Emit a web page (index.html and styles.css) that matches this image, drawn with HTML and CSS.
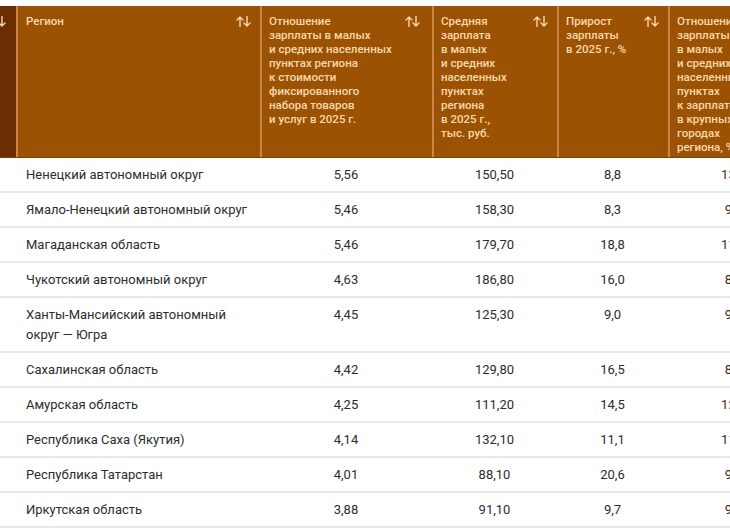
FILE: index.html
```html
<!DOCTYPE html>
<html lang="ru">
<head>
<meta charset="utf-8">
<title>Зарплаты в малых и средних населенных пунктах</title>
<link rel="stylesheet" href="styles.css">
</head>
<body>
<div class="page">
  <div class="table">
    <div class="row head">
      <div class="cell c0 dark"><span class="htext"></span><svg class="sort" viewBox="0 0 15 11"><path d="M4 10.5V1M1 4l3-3 3 3M11 0.5V10M8 7l3 3 3-3"/></svg></div>
      <div class="cell"><span class="htext">Регион</span><svg class="sort" viewBox="0 0 15 11"><path d="M4 10.5V1M1 4l3-3 3 3M11 0.5V10M8 7l3 3 3-3"/></svg></div>
      <div class="cell c3"><span class="htext">Отношение<br>зарплаты в малых<br>и средних населенных<br>пунктах региона<br>к стоимости<br>фиксированного<br>набора товаров<br>и услуг в 2025 г.</span><svg class="sort" viewBox="0 0 15 11"><path d="M4 10.5V1M1 4l3-3 3 3M11 0.5V10M8 7l3 3 3-3"/></svg></div>
      <div class="cell"><span class="htext">Средняя<br>зарплата<br>в малых<br>и средних<br>населенных<br>пунктах<br>региона<br>в 2025 г.,<br>тыс. руб.</span><svg class="sort" viewBox="0 0 15 11"><path d="M4 10.5V1M1 4l3-3 3 3M11 0.5V10M8 7l3 3 3-3"/></svg></div>
      <div class="cell"><span class="htext">Прирост<br>зарплаты<br>в 2025 г., %</span><svg class="sort" viewBox="0 0 15 11"><path d="M4 10.5V1M1 4l3-3 3 3M11 0.5V10M8 7l3 3 3-3"/></svg></div>
      <div class="cell"><span class="htext">Отношение<br>зарплаты<br>в малых<br>и средних<br>населенных<br>пунктах<br>к зарплате<br>в крупных<br>городах<br>региона, %</span><svg class="sort" viewBox="0 0 15 11"><path d="M4 10.5V1M1 4l3-3 3 3M11 0.5V10M8 7l3 3 3-3"/></svg></div>
    </div>

    <div class="row"><div class="cell"></div><div class="cell name">Ненецкий автономный округ</div><div class="cell num">5,56</div><div class="cell num">150,50</div><div class="cell num">8,8</div><div class="cell num">130,5</div></div>
    <div class="row"><div class="cell"></div><div class="cell name">Ямало-Ненецкий автономный округ</div><div class="cell num">5,46</div><div class="cell num">158,30</div><div class="cell num">8,3</div><div class="cell num">96,2</div></div>
    <div class="row"><div class="cell"></div><div class="cell name">Магаданская область</div><div class="cell num">5,46</div><div class="cell num">179,70</div><div class="cell num">18,8</div><div class="cell num">111,4</div></div>
    <div class="row"><div class="cell"></div><div class="cell name">Чукотский автономный округ</div><div class="cell num">4,63</div><div class="cell num">186,80</div><div class="cell num">16,0</div><div class="cell num">89,7</div></div>
    <div class="row"><div class="cell"></div><div class="cell name">Ханты-Мансийский автономный<br>округ — Югра</div><div class="cell num">4,45</div><div class="cell num">125,30</div><div class="cell num">9,0</div><div class="cell num">99,1</div></div>
    <div class="row"><div class="cell"></div><div class="cell name">Сахалинская область</div><div class="cell num">4,42</div><div class="cell num">129,80</div><div class="cell num">16,5</div><div class="cell num">86,3</div></div>
    <div class="row"><div class="cell"></div><div class="cell name">Амурская область</div><div class="cell num">4,25</div><div class="cell num">111,20</div><div class="cell num">14,5</div><div class="cell num">120,4</div></div>
    <div class="row"><div class="cell"></div><div class="cell name">Республика Саха (Якутия)</div><div class="cell num">4,14</div><div class="cell num">132,10</div><div class="cell num">11,1</div><div class="cell num">110,6</div></div>
    <div class="row"><div class="cell"></div><div class="cell name">Республика Татарстан</div><div class="cell num">4,01</div><div class="cell num">88,10</div><div class="cell num">20,6</div><div class="cell num">96,8</div></div>
    <div class="row"><div class="cell"></div><div class="cell name">Иркутская область</div><div class="cell num">3,88</div><div class="cell num">91,10</div><div class="cell num">9,7</div><div class="cell num">99,5</div></div>
  </div>
</div>
</body>
</html>
```

FILE: styles.css
```css
html, body {
  margin: 0;
  padding: 0;
  background: #ffffff;
}

.page {
  width: 730px;
  height: 530px;
  overflow: hidden;
  padding-top: 6px;
  box-sizing: border-box;
  font-family: Roboto, "Liberation Sans", sans-serif;
}

.table {
  margin-left: -34px;
  width: 840px;
}

.row {
  display: grid;
  grid-template-columns: 50px 244px 172px 125px 111px 138px;
  border-bottom: 2px solid #e8e8e6;
}

.row .cell {
  box-sizing: border-box;
  min-width: 0;
  white-space: nowrap;
}

/* header */
.head {
  background: #9b5202;
  border-bottom: 1px solid #7c3f04;
  color: #f8d9ae;
  font-size: 11.5px;
  font-weight: 500;
  line-height: 14px;
}

.head .cell {
  display: flex;
  justify-content: space-between;
  align-items: flex-start;
  padding: 8px 9px 3px 7px;
  border-left: 2px solid #c68646;
}

.head .cell:first-child {
  border-left: none;
}

.head .cell:nth-child(2) {
  padding-left: 8px;
}

.head .c3 {
  padding-right: 12px;
}

.head .dark {
  background: #6b2e03;
  padding-right: 10px;
}

.sort {
  flex: none;
  width: 15px;
  height: 11px;
  margin-top: 2px;
  fill: none;
  stroke: #f8d9ae;
  stroke-width: 1.4;
  stroke-linecap: round;
  stroke-linejoin: round;
}

/* body rows */
.row:not(.head) {
  font-size: 13px;
  line-height: 20px;
  color: #2c2c2c;
}

.row:not(.head) .cell {
  padding: 7px 0 6px;
}

.row:not(.head) .cell.name {
  padding-left: 10px;
}

.num {
  text-align: center;
}
```
